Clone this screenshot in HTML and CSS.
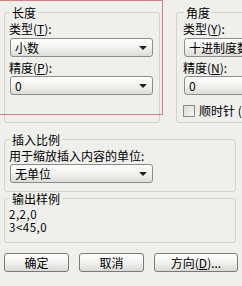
FILE: index.html
```html
<!DOCTYPE html>
<html>
	<head>
		<meta charset="UTF-8">
		<title>图形单位</title>
		<link rel="stylesheet" href="styles.css">
	</head>
	<body>
		<div class="dialog">
			<div class="top-row">
				<fieldset class="group group-length">
					<legend>长度</legend>
					<div class="label first">类型(<u>T</u>):</div>
					<div class="combo"><span>小数</span><i class="arrow"></i></div>
					<div class="label">精度(<u>P</u>):</div>
					<div class="combo tight"><span>0</span><i class="arrow"></i></div>
				</fieldset>
				<fieldset class="group group-angle">
					<legend>角度</legend>
					<div class="label first">类型(<u>Y</u>):</div>
					<div class="combo"><span>十进制度数</span><i class="arrow"></i></div>
					<div class="label">精度(<u>N</u>):</div>
					<div class="combo tight"><span>0</span><i class="arrow"></i></div>
					<div class="check"><span class="box"></span>顺时针 (<u>C</u>)</div>
				</fieldset>
			</div>
			<fieldset class="group group-scale">
				<legend>插入比例</legend>
				<div class="label first">用于缩放插入内容的单位:</div>
				<div class="combo tight"><span>无单位</span><i class="arrow"></i></div>
			</fieldset>
			<fieldset class="group group-sample">
				<legend>输出样例</legend>
				<div class="sample">2,2,0</div>
				<div class="sample">3&lt;45,0</div>
			</fieldset>
			<div class="buttons">
				<div class="button">确定</div>
				<div class="button">取消</div>
				<div class="button wide">方向(<u>D</u>)...</div>
			</div>
			<div class="annotation"></div>
		</div>
	</body>
</html>
```

FILE: styles.css
```css
body {
	margin: 0;
	background-color: #efefec;
	font-family: "Noto Sans CJK SC", "DejaVu Sans", sans-serif;
	font-size: 12px;
	color: #000;
}
.dialog {
	position: relative;
	width: 242px;
	height: 286px;
	padding-left: 4px;
	box-sizing: border-box;
	overflow: hidden;
}
.top-row {
	display: flex;
	gap: 16px;
	margin-top: 6px;
	width: 300px;
}
.group {
	margin: 0;
	padding: 0 6px 0 4px;
	border: 1px solid #d3d3cb;
	border-radius: 3px;
	min-width: 0;
	box-sizing: border-box;
}
.group legend {
	margin-left: 1px;
	padding: 0 2px;
	line-height: 13px;
	height: 13px;
}
.group-length {
	width: 156px;
	flex-shrink: 0;
	padding-bottom: 27px;
}
.group-angle {
	width: 120px;
	flex-shrink: 0;
	padding-left: 6px;
}
.label {
	line-height: 15px;
	height: 15px;
	margin-top: 3px;
	white-space: nowrap;
}
.label.first {
	margin-top: 2px;
}
.combo {
	position: relative;
	height: 19px;
	margin-top: 2px;
	margin-left: 1px;
	border: 1px solid #8c8c8c;
	border-radius: 3px;
	box-sizing: border-box;
	background: linear-gradient(#ffffff, #f4f4f2 45%, #dcdcd8);
	line-height: 17px;
	padding-left: 4px;
	white-space: nowrap;
}
.combo.tight {
	margin-top: 1px;
}
.arrow {
	position: absolute;
	right: 5px;
	top: 7px;
	width: 0;
	height: 0;
	border-left: 4px solid transparent;
	border-right: 4px solid transparent;
	border-top: 4px solid #202020;
}
.group-angle .combo {
	width: 140px;
}
.check {
	display: flex;
	align-items: center;
	gap: 4px;
	margin-top: 9px;
	line-height: 14px;
	white-space: nowrap;
}
.check .box {
	width: 12px;
	height: 12px;
	border: 1px solid #8a8a8a;
	box-sizing: border-box;
	background: linear-gradient(135deg, #d8d8d4, #f8f8f6);
}
.group-scale {
	width: 232px;
	margin-top: 10px;
	padding-bottom: 8px;
}
.group-scale .combo {
	width: 143px;
}
.group-sample {
	width: 232px;
	padding-top: 3px;
	padding-bottom: 8px;
}
.sample {
	height: 13px;
	line-height: 13px;
	font-size: 11.5px;
	letter-spacing: 0.5px;
}
.buttons {
	display: flex;
	gap: 10px;
	margin-top: 10px;
}
.button {
	width: 65px;
	height: 19px;
	flex-shrink: 0;
	border: 1px solid #7a7a7a;
	border-radius: 3px;
	box-sizing: border-box;
	background: linear-gradient(#ffffff, #f2f2f0 50%, #d8d8d4);
	text-align: center;
	line-height: 17px;
}
.button.wide {
	width: 84px;
}
.annotation {
	position: absolute;
	left: -3px;
	top: 0;
	width: 166px;
	height: 115px;
	border: 1px solid #e07a88;
	box-sizing: border-box;
}
```
